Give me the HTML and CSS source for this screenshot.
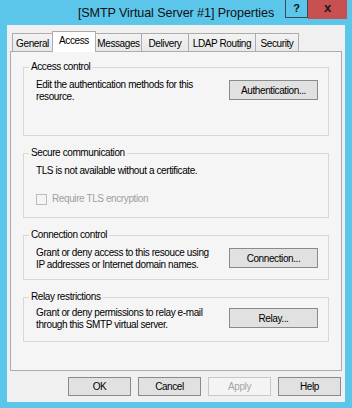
FILE: index.html
```html
<!DOCTYPE html>
<html lang="en">
<head>
    <meta charset="UTF-8">
    <meta name="viewport" content="width=device-width, initial-scale=1.0">
    <title>[SMTP Virtual Server #1] Properties</title>
    <link rel="stylesheet" href="styles.css">
</head>
<body>
    <div class="window">
        <div class="titlebar">
            <span class="title">[SMTP Virtual Server #1] Properties</span>
            <div class="caption-buttons">
                <span class="cap-help">?</span>
                <span class="cap-close">x</span>
            </div>
        </div>
        <div class="client">
            <div class="tabs">
                <div class="tab t-general">General</div>
                <div class="tab t-access selected">Access</div>
                <div class="tab t-messages">Messages</div>
                <div class="tab t-delivery">Delivery</div>
                <div class="tab t-ldap">LDAP Routing</div>
                <div class="tab t-security">Security</div>
            </div>
            <div class="page">
                <fieldset class="group">
                    <legend>Access control</legend>
                    <div class="group-body g-access">
                        <p class="desc">Edit the authentication methods for this<br>resource.</p>
                        <button class="btn btn-wide">Authentication...</button>
                    </div>
                </fieldset>
                <fieldset class="group">
                    <legend>Secure communication</legend>
                    <div class="group-body g-secure">
                        <div>
                            <p class="desc">TLS is not available without a certificate.</p>
                            <label class="check disabled">
                                <span class="box"></span>
                                Require TLS encryption
                            </label>
                        </div>
                    </div>
                </fieldset>
                <fieldset class="group">
                    <legend>Connection control</legend>
                    <div class="group-body g-connection">
                        <p class="desc">Grant or deny access to this resouce using<br>IP addresses or Internet domain names.</p>
                        <button class="btn btn-wide">Connection...</button>
                    </div>
                </fieldset>
                <fieldset class="group">
                    <legend>Relay restrictions</legend>
                    <div class="group-body g-relay">
                        <p class="desc">Grant or deny permissions to relay e-mail<br>through this SMTP virtual server.</p>
                        <button class="btn btn-wide">Relay...</button>
                    </div>
                </fieldset>
            </div>
            <div class="dialog-buttons">
                <button class="btn">OK</button>
                <button class="btn">Cancel</button>
                <button class="btn" disabled>Apply</button>
                <button class="btn">Help</button>
            </div>
        </div>
    </div>
</body>
</html>
```

FILE: styles.css
```css
body {
    margin: 0;
    font-family: "Liberation Sans", Arial, sans-serif;
}
.window {
    width: 352px;
    height: 408px;
    background-color: #5bc6ea;
    display: flex;
    flex-direction: column;
}
.titlebar {
    position: relative;
    height: 25px;
    flex-shrink: 0;
    text-align: center;
}
.title {
    font-size: 12.6px;
    letter-spacing: -0.1px;
    line-height: 26px;
    color: #111;
}
.caption-buttons {
    position: absolute;
    top: 0;
    right: 5px;
    display: flex;
}
.cap-help {
    width: 23px;
    height: 18px;
    box-sizing: border-box;
    border: 1px solid #3a4a52;
    border-top: none;
    font-size: 11px;
    font-weight: bold;
    line-height: 17px;
    text-align: center;
    color: #111;
}
.cap-close {
    width: 39px;
    height: 19px;
    background-color: #c75050;
    font-size: 13px;
    font-weight: bold;
    line-height: 16px;
    text-align: center;
    color: #1a1a1a;
}
.client {
    flex: 1;
    margin: 0 7px 6px;
    padding: 6px 3px 0;
    background-color: #f0f0f0;
    font-size: 10px;
    letter-spacing: -0.4px;
    color: #000;
}
.tabs {
    display: flex;
    align-items: flex-end;
    height: 20px;
    padding-left: 2px;
}
.tab {
    height: 18px;
    box-sizing: border-box;
    border: 1px solid #acacac;
    border-bottom: none;
    margin-right: -1px;
    background: linear-gradient(#f3f3f3, #e8e8e8);
    display: flex;
    align-items: center;
    justify-content: center;
    padding-top: 1px;
}
.tab.selected {
    position: relative;
    z-index: 1;
    height: 21px;
    margin-bottom: -1px;
    background: #fff;
    padding-top: 0;
    padding-bottom: 3px;
}
.t-general { width: 41px; }
.t-access { width: 44px; }
.t-messages { width: 47px; }
.t-delivery { width: 48px; }
.t-ldap { width: 68px; }
.t-security { width: 44px; }
.page {
    height: 320px;
    box-sizing: border-box;
    border: 1px solid #acacac;
    background-color: #f5f5f5;
    padding: 9px 12px 0 12px;
}
.group {
    margin: 0 0 11px;
    padding: 0;
    min-width: 0;
    border: 1px solid #d8d8d8;
}
.group legend {
    margin-left: 5px;
    padding: 0 2px;
    line-height: 12px;
}
.group-body {
    display: flex;
    justify-content: space-between;
    align-items: flex-start;
    box-sizing: border-box;
    padding: 6px 10px 0 12px;
}
.g-access { height: 62px; }
.g-secure { height: 58px; }
.g-connection { height: 38px; }
.g-relay { height: 38px; padding-top: 4px; }
.desc {
    margin: 0;
    line-height: 12px;
}
.check {
    display: flex;
    align-items: center;
    gap: 5px;
    margin-top: 16px;
    line-height: 12px;
}
.check.disabled {
    color: #a0a0a0;
}
.box {
    width: 11px;
    height: 11px;
    box-sizing: border-box;
    border: 1px solid #bcbcbc;
    background-color: #f4f4f4;
}
.btn {
    width: 63px;
    height: 19px;
    padding: 0;
    border: 1px solid #8a8a8a;
    background-color: #e1e1e1;
    font-family: inherit;
    font-size: 10px;
    letter-spacing: -0.4px;
    color: #000;
}
.btn:disabled {
    border-color: #c8c8c8;
    background-color: #f4f4f4;
    color: #a6a6a6;
}
.btn-wide {
    width: 89px;
    height: 20px;
    margin-top: 1px;
    flex-shrink: 0;
}
.dialog-buttons {
    display: flex;
    justify-content: flex-end;
    gap: 7px;
    margin-top: 6px;
    padding-right: 1px;
}
```
